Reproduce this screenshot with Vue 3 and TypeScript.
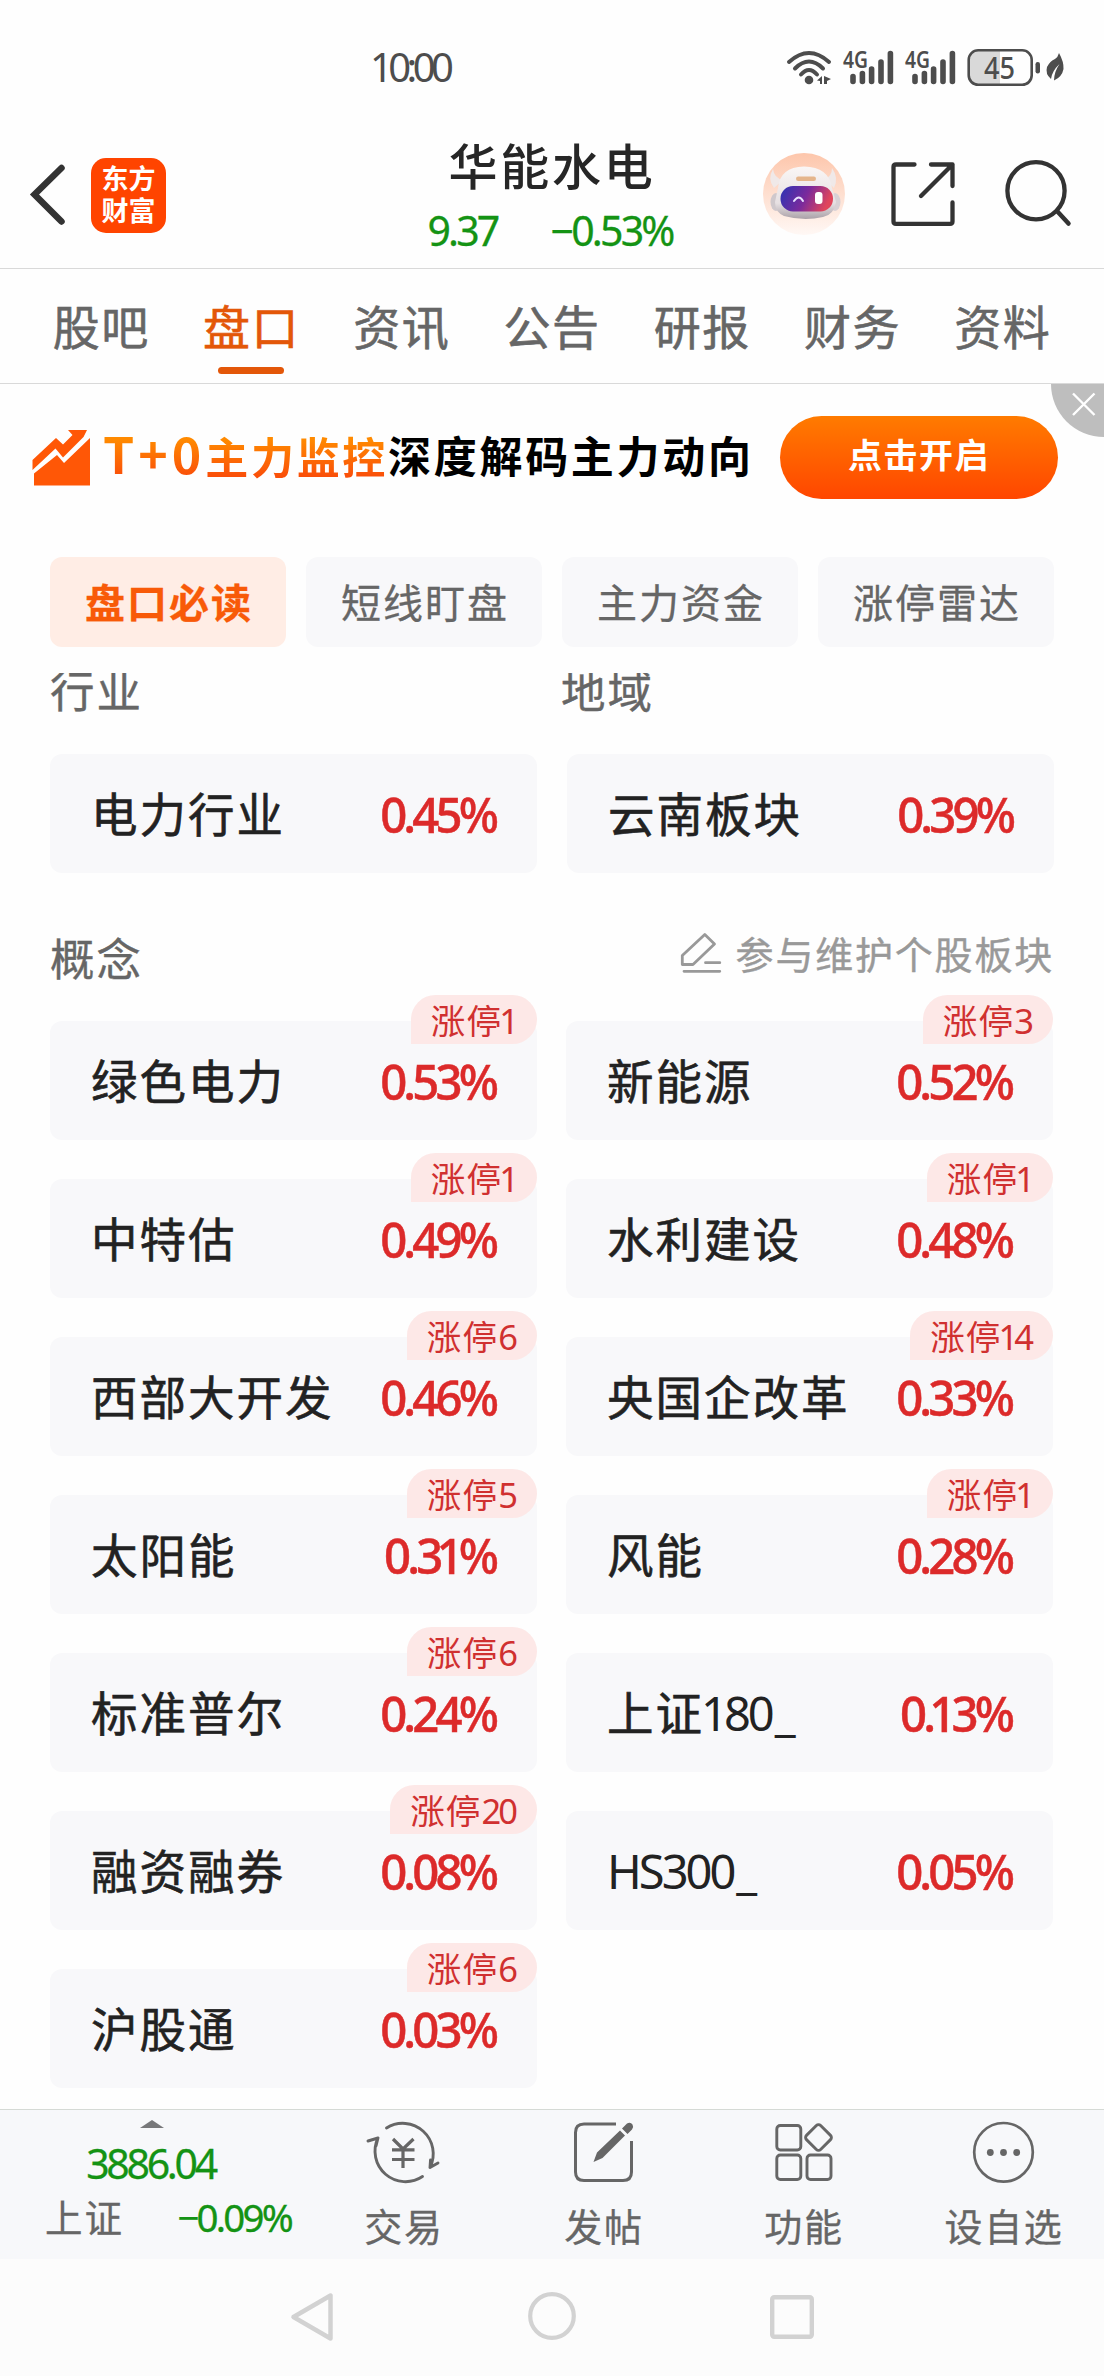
<script setup lang="ts">
interface Sector {
  name: string
  change: string
  limitUp?: number
}

const tabs: string[] = ['股吧', '盘口', '资讯', '公告', '研报', '财务', '资料']
const chips: string[] = ['盘口必读', '短线盯盘', '主力资金', '涨停雷达']

const industry: Sector = { name: '电力行业', change: '0.45%' }
const region: Sector = { name: '云南板块', change: '0.39%' }

const concepts: Sector[] = [
  { name: '绿色电力', change: '0.53%', limitUp: 1 },
  { name: '新能源', change: '0.52%', limitUp: 3 },
  { name: '中特估', change: '0.49%', limitUp: 1 },
  { name: '水利建设', change: '0.48%', limitUp: 1 },
  { name: '西部大开发', change: '0.46%', limitUp: 6 },
  { name: '央国企改革', change: '0.33%', limitUp: 14 },
  { name: '太阳能', change: '0.31%', limitUp: 5 },
  { name: '风能', change: '0.28%', limitUp: 1 },
  { name: '标准普尔', change: '0.24%', limitUp: 6 },
  { name: '上证180_', change: '0.13%' },
  { name: '融资融券', change: '0.08%', limitUp: 20 },
  { name: 'HS300_', change: '0.05%' },
  { name: '沪股通', change: '0.03%', limitUp: 6 },
]

// Splits a label so that digits can be set tighter than the Chinese characters.
const glyphs = (text: string | number): string[] => String(text).split('')
const glyphClass = (c: string) => ({ num: /[\d.%A-Z_−]/.test(c), one: c === '1', line: c === '_' })
</script>

<template>
  <div class="screen">
    <div class="status">
      <span class="clock">10:00</span>
      <svg class="status-icons" viewBox="780 40 300 56" width="300" height="56">
        <g fill="none" stroke="#4d4d4d" stroke-width="4" stroke-linecap="round">
          <path d="M789 62Q799 53 809 53T829 62" />
          <path d="M795 68.500Q802 61.500 809 61.500T823 68.500" />
          <path d="M801 74.500Q805 70 809 70T817 74.500" />
        </g>
        <g fill="#4d4d4d">
          <circle cx="809" cy="80" r="4.300" />
          <path d="M817 80.500l5-4.500v8h-2v-3zM824 76l7 3-4 2v3h-3z" />
        </g>
        <g v-for="dx in [0, 62]" :key="dx" :transform="`translate(${dx} 0)`">
          <text class="net" x="843" y="67.500" textLength="25" lengthAdjust="spacingAndGlyphs">4G</text>
          <g stroke="#4d4d4d" stroke-width="5.600" stroke-linecap="round">
            <path d="M853 76.500V81.500M862.400 73.500V81.500M871.600 69V81.500M881 62V81.500M890.400 53.500V81.500" />
          </g>
        </g>
        <path d="M1000 50.500H979Q968.500 50.500 968.500 61V74.500Q968.500 84.500 979 84.500H1000Z" fill="#d9d9d9" />
        <rect x="968.700" y="50.300" width="63" height="34.500" rx="9.500" fill="none" stroke="#4d4d4d" stroke-width="2.600" />
        <text class="battery" x="984" y="78.500" textLength="31" lengthAdjust="spacingAndGlyphs">45</text>
        <rect x="1035.500" y="62" width="4.500" height="11.500" rx="2.200" fill="#4d4d4d" />
        <path d="M1059 53Q1064 62 1063.500 69Q1062 77 1054 80.500Q1054 72 1059.500 64Q1052 71 1051 79Q1045 74 1047 67Q1050 61 1055 59Q1058 57 1059 53Z" fill="#4d4d4d" />
      </svg>
    </div>

    <header class="header">
      <div class="left">
        <svg viewBox="20 150 60 90" width="60" height="90">
          <path d="M61.500 168L34.500 194.500L61.500 221.500" fill="none" stroke="#333" stroke-width="6.500" stroke-linecap="round" stroke-linejoin="miter" />
        </svg>
        <div class="logo"><span>东方</span><span>财富</span></div>
      </div>
      <div class="stock">
        <h1>华能水电</h1>
        <div class="quote"><span>9.37</span><span>−0.53%</span></div>
      </div>
      <div class="actions">
        <svg viewBox="762 152 84 84" width="84" height="84">
          <defs>
            <linearGradient id="halo" x1="0" y1="0" x2="0" y2="1">
              <stop offset="0" stop-color="#fdc6ab" /><stop offset="1" stop-color="#fff8f5" />
            </linearGradient>
            <linearGradient id="visor" x1="0" y1="0" x2="1" y2="0.25">
              <stop offset="0" stop-color="#2a34b4" /><stop offset="0.55" stop-color="#7b2a9c" /><stop offset="1" stop-color="#e0455c" />
            </linearGradient>
            <linearGradient id="shell" x1="0" y1="0" x2="0" y2="1">
              <stop offset="0" stop-color="#faf6f5" /><stop offset="0.7" stop-color="#e6e0e2" /><stop offset="1" stop-color="#aaa1a8" />
            </linearGradient>
          </defs>
          <circle cx="804" cy="194" r="41" fill="url(#halo)" />
          <path d="M773 169Q767 179 774 188L783 180Q774 178 773 169ZM832 168Q839 178 834 188L825 179Q832 176 832 168Z" fill="#f0e9e8" />
          <ellipse cx="776" cy="202" rx="5.500" ry="9" fill="#cfc8cc" />
          <ellipse cx="835" cy="202" rx="5.500" ry="9" fill="#d8d1d5" />
          <path d="M778 188Q780 167 804 166.500Q829 167 832 188L836 202Q834 215 823 217Q804 221.500 784 216Q775 212 775 202Z" fill="url(#shell)" />
          <rect x="796" y="176.500" width="20" height="4.500" rx="2.200" fill="#e5b58b" />
          <rect x="780.500" y="186" width="52.500" height="25.500" rx="12.500" fill="url(#visor)" />
          <path d="M794 201Q799 194 803 201" fill="none" stroke="#e9e2ff" stroke-width="2" stroke-linecap="round" />
          <rect x="815" y="192" width="7.500" height="12" rx="3" fill="#fff" />
        </svg>
        <svg class="share" viewBox="885 155 76 76" width="76" height="76">
          <path d="M914.500 164.500H896Q893.500 164.500 893.500 167V221.500Q893.500 223.800 896 223.800H950Q952.500 223.800 952.500 221.500V202.500M931 164.500H952.500V186M952.500 164.500L921 196" fill="none" stroke="#333" stroke-width="4.300" stroke-linecap="round" stroke-linejoin="round" />
        </svg>
        <svg class="search" viewBox="1000 152 76 82" width="76" height="82">
          <circle cx="1036" cy="190.700" r="28.600" fill="none" stroke="#333" stroke-width="4.300" />
          <path d="M1057 211L1068.500 223.500" stroke="#333" stroke-width="4.500" stroke-linecap="round" />
        </svg>
      </div>
    </header>

    <nav class="tabs">
      <span v-for="(t, i) in tabs" :key="t" :class="['tab', { on: i === 1 }]">{{ t }}</span>
    </nav>

    <section class="banner">
      <svg viewBox="30 426 62 64" width="62" height="64">
        <path d="M34 473.500L57 455L64 463L90 438V485.500H34Z" fill="#ff5706" />
        <path d="M32.500 470V460L56 438L63 444.500L72.500 435L68 430H87L83.500 437L63 457.500L55.500 448.500Z" fill="#ff5706" />
      </svg>
      <span class="slogan"><b class="hot"><i>T+0</i>主力监控</b><b>深度解码主力动向</b></span>
      <span class="open">点击开启</span>
      <svg class="close" viewBox="0 0 53 53" width="53" height="53">
        <path d="M0 0A53 53 0 0 0 53 53V0Z" fill="#bebebe" />
        <path d="M22 9.500L43.500 31M43.500 9.500L22 31" stroke="#fff" stroke-width="2.400" />
      </svg>
    </section>

    <div class="chips">
      <span v-for="(c, i) in chips" :key="c" :class="['chip', { on: i === 0 }]">{{ c }}</span>
    </div>

    <main class="content">
      <div class="labels"><span>行业</span><span>地域</span></div>
      <div class="pair">
        <div v-for="s in [industry, region]" :key="s.name" class="card">
          <span class="name">{{ s.name }}</span>
          <span class="pct">{{ s.change }}</span>
        </div>
      </div>

      <div class="concept-head">
        <span>概念</span>
        <span class="edit">
          <svg viewBox="678 930 46 46" width="46" height="46">
            <path d="M682.300 964.500V955.500L704.800 934.500L714.500 944L693 964.500ZM705.500 962.700H719.800M684 971.300H719.800" fill="none" stroke="#999" stroke-width="2.800" stroke-linecap="round" stroke-linejoin="round" />
          </svg>
          参与维护个股板块
        </span>
      </div>

      <div class="concepts">
        <div v-for="s in concepts" :key="s.name" class="card">
          <span class="name"><span v-for="(c, k) in glyphs(s.name)" :key="k" :class="glyphClass(c)">{{ c }}</span></span>
          <span class="pct"><span v-for="(c, k) in glyphs(s.change)" :key="k" :class="{ one: c === '1' }">{{ c }}</span></span>
          <span v-if="s.limitUp" class="badge">涨停<span v-for="(c, k) in glyphs(s.limitUp)" :key="k" :class="glyphClass(c)">{{ c }}</span></span>
        </div>
      </div>
    </main>

    <footer class="toolbar">
      <div class="index">
        <svg viewBox="0 0 24 8" width="24" height="8"><path d="M0 8L12 0L24 8Z" fill="#77787a" /></svg>
        <span class="points">3886.04</span>
        <div class="index-row"><span>上证</span><span class="drop">−0.09%</span></div>
      </div>
      <div class="tool">
        <svg viewBox="364 2116 80 72" width="80" height="72">
          <g fill="none" stroke="#666" stroke-width="2.900" stroke-linecap="round" stroke-linejoin="round">
            <path d="M386.500 2128A30.500 30.500 0 0 1 430 2167.500L438 2163M430 2167.500L430.500 2160" />
            <path d="M422.500 2176.500A30.500 30.500 0 0 1 378 2138L368 2141M378 2138L376 2146" />
            <path d="M393 2139L403 2149L413.500 2139M392 2149.800H414.500M392 2159.500H414.500M403 2149V2168" stroke-width="3.200" stroke-linecap="butt" />
          </g>
        </svg>
        <span>交易</span>
      </div>
      <div class="tool">
        <svg viewBox="564 2116 80 72" width="80" height="72">
          <path d="M616 2124H584Q575.500 2124 575.500 2132.500V2172Q575.500 2180.500 584 2180.500H623Q631.500 2180.500 631.500 2172V2141" fill="none" stroke="#666" stroke-width="3" />
          <path d="M593.500 2162L597 2152.500L620 2130.500L625 2135.500L602.500 2158ZM622 2128.500L627 2123.500Q630.500 2121.500 632.500 2124.500Q634 2127 632 2129.500L627.500 2134Z" fill="#666" />
        </svg>
        <span>发帖</span>
      </div>
      <div class="tool">
        <svg viewBox="764 2116 80 72" width="80" height="72">
          <g fill="none" stroke="#666" stroke-width="2.900">
            <rect x="776.800" y="2125.500" width="24" height="24.500" rx="3.500" />
            <rect x="776.800" y="2155" width="24" height="24.500" rx="3.500" />
            <rect x="807" y="2155" width="24" height="24.500" rx="3.500" />
            <rect x="808.500" y="2127.500" width="20" height="20" rx="3" transform="rotate(45 818.500 2137.500)" />
          </g>
        </svg>
        <span>功能</span>
      </div>
      <div class="tool">
        <svg viewBox="964 2116 80 72" width="80" height="72">
          <circle cx="1003.500" cy="2152.300" r="29.300" fill="none" stroke="#666" stroke-width="2.700" />
          <g fill="#666"><circle cx="990.300" cy="2152.500" r="3.400" /><circle cx="1003.500" cy="2152.500" r="3.400" /><circle cx="1016.700" cy="2152.500" r="3.400" /></g>
        </svg>
        <span>设自选</span>
      </div>
    </footer>

    <div class="sysnav">
      <svg viewBox="286 2289 52 58" width="52" height="58"><path d="M330.500 2296.500V2339.500L293.500 2318Z" fill="none" stroke="#d2d2d2" stroke-width="4.500" stroke-linejoin="round" /></svg>
      <svg viewBox="0 0 52 58" width="52" height="58"><circle cx="26" cy="28" r="21.800" fill="none" stroke="#d2d2d2" stroke-width="4.200" /></svg>
      <svg viewBox="0 0 52 58" width="52" height="58"><rect x="6.200" y="9.200" width="39.600" height="39.600" rx="2" fill="none" stroke="#d2d2d2" stroke-width="4.400" /></svg>
    </div>
  </div>
</template>

<style>
body {
  margin: 0;
  background: #fefefe;
}
</style>

<style scoped>
.screen {
  width: 1104px;
  height: 2376px;
  display: flex;
  flex-direction: column;
  overflow: hidden;
  background: #fefefe;
  color: #222;
  font-family: 'Noto Sans', 'Noto Sans CJK SC', sans-serif;
}
svg {
  display: block;
  flex: none;
}
.status {
  height: 100px;
  display: flex;
  align-items: flex-start;
  justify-content: space-between;
  padding: 40px 24px 0 370px;
  box-sizing: border-box;
}
.clock {
  font-size: 40px;
  line-height: 54px;
  letter-spacing: -4.6px;
  color: #4d4d4d;
}
.net {
  font-size: 22.5px;
  font-weight: 600;
  fill: #4d4d4d;
}
.battery {
  font-size: 31px;
  font-weight: 500;
  fill: #4d4d4d;
}
.header {
  height: 168px;
  display: grid;
  grid-template-columns: 340px 1fr 340px;
  border-bottom: 1px solid #d9d9d9;
}
.left {
  display: flex;
  align-items: center;
  gap: 11px;
  padding: 50px 0 28px 20px;
}
.logo {
  width: 75px;
  height: 75px;
  border-radius: 15px;
  background: #ff4400;
  color: #fff;
  display: flex;
  flex-direction: column;
  align-items: center;
  justify-content: center;
  font-size: 27px;
  font-weight: 700;
  line-height: 32px;
}
.stock {
  text-align: center;
  white-space: nowrap;
}
.stock h1 {
  margin: 38px 0 0;
  font-size: 49px;
  line-height: 56px;
  letter-spacing: 2.8px;
  font-weight: 500;
  color: #262626;
}
.quote {
  display: flex;
  justify-content: center;
  gap: 53px;
  margin: 8px 4px 0 0;
  font-size: 41px;
  line-height: 56px;
  letter-spacing: -2.8px;
  color: #149314;
  -webkit-text-stroke: 0.3px currentColor;
}
.actions {
  display: flex;
  align-items: flex-start;
  padding-top: 52px;
}
.actions svg:first-child {
  margin-left: -2px;
}
.share {
  margin: 3px 0 0 39px;
}
.search {
  margin-left: 39px;
}
.tabs {
  height: 114px;
  display: flex;
  padding: 0 26px;
  border-bottom: 1px solid #d9d9d9;
}
.tab {
  flex: 1;
  display: flex;
  flex-direction: column;
  align-items: center;
  padding-top: 27px;
  font-size: 47px;
  line-height: 62px;
  letter-spacing: 1.5px;
  color: #666;
  -webkit-text-stroke: 0.6px currentColor;
}
.tab.on {
  color: #e35709;
}
.tab.on::after {
  content: '';
  width: 66px;
  height: 7px;
  border-radius: 4px;
  background: #e35709;
  margin-top: 9px;
}
.banner {
  position: relative;
  height: 173px;
  display: flex;
  align-items: flex-start;
  padding: 0 46px 0 30px;
}
.banner svg:first-child {
  margin-top: 42px;
}
.slogan {
  display: flex;
  margin: 43px 0 0 11px;
  font-size: 43px;
  line-height: 60px;
  letter-spacing: 2.7px;
  white-space: nowrap;
  color: #000;
  flex: 1;
}
.hot {
  background: linear-gradient(#ff8a00 20%, #fa5009 80%);
  -webkit-background-clip: text;
  background-clip: text;
  color: transparent;
}
.hot i {
  font-family: 'Noto Sans CJK SC', sans-serif;
  font-size: 50px;
  font-style: normal;
  line-height: 1;
  letter-spacing: 4px;
}
.open {
  width: 278px;
  height: 83px;
  margin-top: 32px;
  border-radius: 42px;
  background: linear-gradient(#ff7b00, #ff4600);
  color: #fff;
  font-size: 34px;
  font-weight: 700;
  line-height: 79px;
  letter-spacing: 1.5px;
  text-align: center;
}
.close {
  position: absolute;
  top: 0;
  right: 0;
}
.chips {
  display: flex;
  gap: 20px;
  padding: 0 50px;
}
.chip {
  flex: 1;
  height: 90px;
  border-radius: 12px;
  background: #f8f8fa;
  color: #666;
  font-size: 40px;
  line-height: 92px;
  letter-spacing: 2px;
  text-indent: 2px;
  text-align: center;
  -webkit-text-stroke: 0.3px currentColor;
}
.chip.on {
  background: #ffede5;
  color: #f85a08;
  font-weight: 700;
}
.content {
  height: 1436px;
  margin-top: 26px;
  padding: 0 50px;
  overflow: hidden;
}
.labels {
  display: flex;
  margin-top: -12px;
  height: 93px;
  font-size: 44.5px;
  line-height: 60px;
  letter-spacing: 2px;
  color: #666;
  -webkit-text-stroke: 0.4px currentColor;
}
.labels span {
  width: 511px;
  flex: none;
}
.pair {
  display: grid;
  grid-template-columns: 487px 487px;
  gap: 30px;
}
.card {
  position: relative;
  height: 119px;
  border-radius: 12px;
  background: #f8f8fa;
  display: flex;
  align-items: center;
  justify-content: space-between;
  padding: 0 42px 0 41px;
  box-sizing: border-box;
}
.name {
  font-size: 46.5px;
  line-height: 60px;
  letter-spacing: 2px;
  -webkit-text-stroke: 0.6px currentColor;
}
.name .num {
  font-size: 47px;
  letter-spacing: -3px;
  -webkit-text-stroke: 0;
}
.name .line {
  margin-left: 3px;
}
.pct {
  font-size: 49px;
  line-height: 60px;
  letter-spacing: -4px;
  font-weight: 500;
  color: #dc2a2a;
  transform: scaleX(0.965);
  transform-origin: right;
  -webkit-text-stroke: 0.5px currentColor;
}
.one {
  margin: 0 -1px 0 -3px;
}
.concept-head {
  height: 148px;
  padding-top: 56px;
  box-sizing: border-box;
  display: flex;
  justify-content: space-between;
  font-size: 44.5px;
  line-height: 60px;
  letter-spacing: 2px;
  color: #666;
  -webkit-text-stroke: 0.4px currentColor;
}
.edit {
  display: flex;
  gap: 12px;
  color: #999;
  font-size: 38px;
  line-height: 51px;
  letter-spacing: 1.8px;
}
.edit svg {
  margin-top: 1px;
}
.concepts {
  display: grid;
  grid-template-columns: 487px 487px;
  gap: 39px 29px;
}
.badge {
  position: absolute;
  top: -26px;
  right: 0;
  height: 49px;
  padding: 0 22px 0 20px;
  border-radius: 25px 25px 25px 0;
  background: #fde8e7;
  color: #d03030;
  font-size: 34.5px;
  line-height: 52px;
  letter-spacing: 1.2px;
  white-space: nowrap;
}
.badge .num {
  letter-spacing: -3px;
}
.toolbar {
  height: 149px;
  border-top: 1px solid #d5dad5;
  background: #f7f8fa;
  display: flex;
  color: #666;
  -webkit-text-stroke: 0.3px currentColor;
}
.index {
  width: 304px;
  display: flex;
  flex-direction: column;
  align-items: center;
  padding-top: 10px;
}
.points {
  margin: 6px 3px 0 0;
  font-size: 41px;
  line-height: 58px;
  letter-spacing: -3.3px;
  color: #149314;
}
.index-row {
  width: 246px;
  display: flex;
  justify-content: space-between;
  align-self: flex-start;
  margin: 0 0 0 45px;
  font-size: 37.5px;
  line-height: 52px;
  letter-spacing: 2px;
  white-space: nowrap;
}
.drop {
  font-size: 38.5px;
  line-height: 51px;
  letter-spacing: -2.8px;
  color: #149314;
}
.tool {
  width: 200px;
  display: flex;
  flex-direction: column;
  align-items: center;
  padding-top: 6px;
  font-size: 38px;
  line-height: 52px;
  letter-spacing: 1.7px;
}
.tool span {
  margin-top: 12px;
}
.sysnav {
  flex: 1;
  background: #fcfcfc;
  display: flex;
  justify-content: center;
  gap: 188px;
  padding-top: 29px;
}
</style>
